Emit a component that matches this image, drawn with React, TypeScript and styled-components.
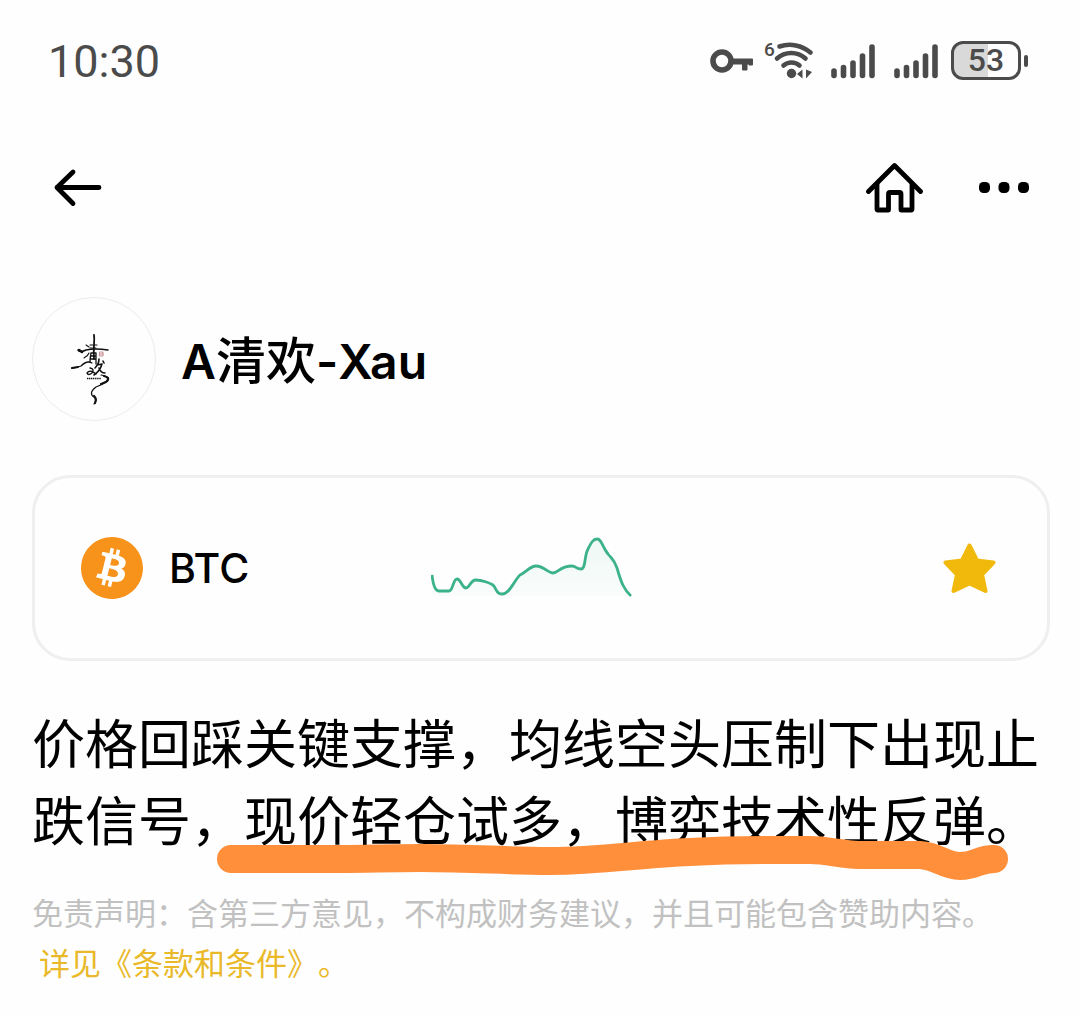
import React from "react";
import styled, { createGlobalStyle } from "styled-components";
import { SiBitcoin } from "react-icons/si";

const GlobalStyle = createGlobalStyle`
  *, *::before, *::after { box-sizing: border-box; }
  body {
    margin: 0;
    background: #fefefe;
    color: #000;
    font-family: "Inter", "Noto Sans CJK SC", sans-serif;
    text-spacing-trim: space-all;
  }
`;

const Screen = styled.div`
  min-height: 100vh;
  padding-bottom: 24px;
`;

const StatusBar = styled.header`
  display: flex;
  align-items: center;
  justify-content: space-between;
  height: 124px;
  padding: 0 52px 0 48px;
  color: #4b4b4b;
`;

const Clock = styled.time`
  font-family: "Roboto", sans-serif;
  font-size: 45px;
  line-height: 56px;
`;

const StatusIcons = styled.div`
  display: flex;
  align-items: center;
  gap: 9px;
  padding-bottom: 3px;

  svg { display: block; }
`;

const Battery = styled.div`
  display: flex;
  align-items: center;
  gap: 3px;
  margin-left: 1px;
`;

const BatteryCell = styled.div`
  display: flex;
  align-items: center;
  justify-content: center;
  width: 70px;
  height: 39px;
  border: 3px solid #4b4b4b;
  border-radius: 12px;
  background: linear-gradient(90deg, #d9d9d9 53%, #fefefe 53%);
  font-family: "Roboto", sans-serif;
  font-size: 32px;
  font-weight: 500;
  line-height: 33px;
`;

const BatteryTip = styled.div`
  width: 4px;
  height: 12px;
  border-radius: 2px;
  background: #4b4b4b;
`;

const NavBar = styled.nav`
  display: flex;
  align-items: center;
  justify-content: space-between;
  height: 128px;
  padding: 0 50px 0 52px;
`;

const NavActions = styled.div`
  display: flex;
  align-items: center;
  gap: 54px;
`;

const IconButton = styled.button`
  display: flex;
  align-items: center;
  justify-content: center;
  padding: 0;
  border: 0;
  background: none;
  color: inherit;
  cursor: pointer;
`;

const Content = styled.main`
  padding: 45px 30px 0 32px;
`;

const Author = styled.section`
  display: flex;
  align-items: center;
  gap: 25px;
`;

const Avatar = styled.div`
  display: flex;
  flex: none;
  width: 124px;
  height: 124px;
  border: 1px solid #ececec;
  border-radius: 50%;
  overflow: hidden;
`;

const AuthorName = styled.h1`
  margin: 0;
  font-size: 48px;
  font-weight: 600;
  line-height: 60px;
`;

const Han = styled.span`
  font-family: "Noto Sans CJK SC", sans-serif;
  font-size: 50px;
  font-weight: 500;
`;

const CoinCard = styled.section`
  display: grid;
  grid-template-columns: 350px 1fr auto;
  align-items: center;
  height: 186px;
  margin-top: 54px;
  padding: 0 50px 0 46px;
  border: 3px solid #efefef;
  border-radius: 38px;
`;

const Coin = styled.div`
  display: flex;
  align-items: center;
  gap: 26px;
`;

const CoinSymbol = styled.span`
  font-size: 41px;
  font-weight: 500;
  line-height: 50px;
`;

const Post = styled.p`
  position: relative;
  margin: 42px 0 0;
  font-family: "Noto Sans CJK SC", sans-serif;
  font-size: 53px;
  line-height: 77px;
`;

const Marker = styled.svg`
  position: absolute;
  left: 184px;
  top: 127px;
  pointer-events: none;
`;

const Disclaimer = styled.p`
  margin: 30px 0 0;
  color: #c1c1c1;
  font-family: "Noto Sans CJK SC", sans-serif;
  font-size: 31px;
  line-height: 50px;
`;

const TermsLink = styled.a`
  display: inline-block;
  margin-left: 7px;
  color: #e9b929;
  text-decoration: none;
`;

const KeyIcon = () => (
  <svg width="44" height="26" viewBox="0 0 44 26" fill="none" stroke="currentColor">
    <circle cx="12" cy="13" r="9" strokeWidth="5.600" />
    <path
      d="M21 11.500H42V16.500H39.500V15.500H36.500V21.500H33V15.500H21Z"
      fill="currentColor"
      strokeWidth="2"
      strokeLinejoin="round"
    />
  </svg>
);

const WifiIcon = () => (
  <svg width="52" height="54" viewBox="-1 -6 52 54" fill="none" stroke="currentColor" strokeWidth="4.600" strokeLinecap="round">
    <text x="0" y="16" fill="currentColor" stroke="none" fontFamily="Roboto, sans-serif" fontSize="19" fontWeight="500">6</text>
    <path d="M15.500 6.500A32 32 0 0 1 46.500 12.500" />
    <path d="M13 18.500A21 21 0 0 1 41.500 18.500" />
    <path d="M19.500 25.500A12 12 0 0 1 35.500 25.500" />
    <circle cx="27.500" cy="33.500" r="4.700" fill="currentColor" stroke="none" />
    <path d="M38.500 29.500V38.500L33 34ZM42 29.500V38.500L48 32Z" fill="currentColor" stroke="none" />
  </svg>
);

const SignalIcon = () => (
  <svg width="54" height="36" viewBox="0 0 54 36" stroke="currentColor" strokeWidth="5.600" strokeLinecap="round">
    <path d="M10 28V32.500M19.500 24.500V32.500M29 20V32.500M38.500 13V32.500M48 4V32.500" />
  </svg>
);

const BackIcon = () => (
  <svg width="52" height="44" viewBox="0 0 52 44" fill="none" stroke="currentColor" strokeWidth="4.800" strokeLinecap="round" strokeLinejoin="round">
    <path d="M47 21.500H5M21 6L5 21.500L21 37.500" />
  </svg>
);

const HomeIcon = () => (
  <svg width="58" height="52" viewBox="0 0 58 52" fill="none" stroke="currentColor" strokeWidth="4.800" strokeLinecap="round" strokeLinejoin="round">
    <path d="M2.500 29.500L28.500 3.500L54.500 29.500" />
    <path d="M11 22V47Q11 48 12 48H22.500V32Q22.500 30.500 24 30.500H33.500Q35 30.500 35 32V48H45Q46 48 46 47V22" />
  </svg>
);

const MoreIcon = () => (
  <svg width="52" height="12" viewBox="0 0 52 12" fill="currentColor">
    <rect x="1" y="0" width="11" height="11" rx="4.500" />
    <rect x="20.500" y="0" width="11" height="11" rx="4.500" />
    <rect x="40" y="0" width="11" height="11" rx="4.500" />
  </svg>
);

const Calligraphy = () => (
  <svg width="122" height="122" viewBox="0 0 122 122" fill="none" stroke="#111" strokeLinecap="round" strokeLinejoin="round" role="img" aria-label="清欢">
    <path d="M61 37C62 43 60 48 61 61" strokeWidth="1.800" />
    <path d="M45 52Q47 55 53 52Q62 50 75 52" strokeWidth="1.500" />
    <path d="M46 52L49 54" strokeWidth="2.600" />
    <path d="M53 47L56 49M57 47H64M57 50H63M51 60Q55 58 56 55" strokeWidth="1.100" />
    <path d="M58 55Q57 60 57 64M58 55H63V66M58 58H63M58 61H63" strokeWidth="1.300" />
    <path d="M67 54H70V58H67ZM67 56H70" stroke="#b9737a" strokeWidth="0.800" />
    <path d="M39 70Q43 70 48 68Q54 62 59 65M57 70Q62 71 59 75Q55 78 54 75Q57 71 63 76" strokeWidth="1.300" />
    <path d="M39 70L45 69" strokeWidth="2" />
    <path d="M66 61Q66 66 62 70M64 67L69 66Q67 73 61 77M66 70Q68 75 72 75M70 63L71 65" strokeWidth="1.600" />
    <path d="M54 80.500H68" strokeWidth="1.500" strokeDasharray="1.300 0.600" strokeLinecap="butt" />
    <path d="M68 77Q79 79 74 83Q69 87 63 89Q55 95 61 99Q65 101 61 106" strokeWidth="1.200" />
    <path d="M71 78Q78 80 73 84L68 86M61 98Q64 101 62 105" strokeWidth="2.200" />
  </svg>
);

const Sparkline = () => (
  <svg width="204" height="64" viewBox="1 -1 204 64" role="img" aria-label="BTC">
    <defs>
      <linearGradient id="trend" x1="0" y1="0" x2="0" y2="1">
        <stop offset="0" stopColor="#2eb385" stopOpacity="0.080" />
        <stop offset="1" stopColor="#2eb385" stopOpacity="0.020" />
      </linearGradient>
    </defs>
    <path d="M2 38C3 47 5 54 9 54H19C23 54 23 42 27 42C31 42 32 51 36 51C40 51 40 43 46 43C52 43 60 46 63 48C67 52 66 57 72 57C80 57 85 42 90 38C95 36 100 29 106 29C114 29 118 36 123 36C128 36 130 29 142 29C146 29 146 32 151 32C156 32 154 19 158 12C161 6 163 2 167 2C172 2 172 10 178 17C182 22 184 22 187 31C191 45 194 53 201 59H2Z" fill="url(#trend)" />
    <path d="M2 38C3 47 5 54 9 54H19C23 54 23 42 27 42C31 42 32 51 36 51C40 51 40 43 46 43C52 43 60 46 63 48C67 52 66 57 72 57C80 57 85 42 90 38C95 36 100 29 106 29C114 29 118 36 123 36C128 36 130 29 142 29C146 29 146 32 151 32C156 32 154 19 158 12C161 6 163 2 167 2C172 2 172 10 178 17C182 22 184 22 187 31C191 45 194 53 201 59" fill="none" stroke="#3bb28a" strokeWidth="2.800" strokeLinejoin="round" />
  </svg>
);

const StarIcon = () => (
  <svg width="54" height="52" viewBox="0 0 54 52" fill="#f0b90b" stroke="#f0b90b" strokeWidth="4" strokeLinejoin="round">
    <path d="M26.500 3.500L34 18.500L50.500 20.500L39 32.500L42.500 49L26.500 41.500L10.500 49L14 32.500L2.500 20.500L19 18.500Z" />
  </svg>
);

const HighlightStroke = () => (
  <Marker width="792" height="54" viewBox="216 830 792 54" fill="none" aria-hidden="true">
    <path
      d="M231 859H340C370 859 385 858 420 858C480 858 500 861 550 861C600 861 640 854 690 852C740 849 770 850 810 850C830 850 840 855 865 855H920C938 856 944 866 960 866C976 866 978 859 994 859"
      stroke="#ff8f3a"
      strokeWidth="28"
      strokeLinecap="round"
      strokeLinejoin="round"
    />
  </Marker>
);

export default function App() {
  return (
    <Screen>
      <GlobalStyle />
      <StatusBar>
        <Clock>10:30</Clock>
        <StatusIcons>
          <KeyIcon />
          <WifiIcon />
          <SignalIcon />
          <SignalIcon />
          <Battery>
            <BatteryCell>53</BatteryCell>
            <BatteryTip />
          </Battery>
        </StatusIcons>
      </StatusBar>
      <NavBar>
        <IconButton type="button" aria-label="返回"><BackIcon /></IconButton>
        <NavActions>
          <IconButton type="button" aria-label="首页"><HomeIcon /></IconButton>
          <IconButton type="button" aria-label="更多"><MoreIcon /></IconButton>
        </NavActions>
      </NavBar>
      <Content>
        <Author>
          <Avatar><Calligraphy /></Avatar>
          <AuthorName>A<Han>清欢</Han>-Xau</AuthorName>
        </Author>
        <CoinCard>
          <Coin>
            <SiBitcoin size={62} color="#f7931a" aria-hidden="true" />
            <CoinSymbol>BTC</CoinSymbol>
          </Coin>
          <Sparkline />
          <IconButton type="button" aria-label="收藏"><StarIcon /></IconButton>
        </CoinCard>
        <Post>
          价格回踩关键支撑，均线空头压制下出现止跌信号，现价轻仓试多，博弈技术性反弹。
          <HighlightStroke />
        </Post>
        <Disclaimer>
          免责声明：含第三方意见，不构成财务建议，并且可能包含赞助内容。
          <TermsLink href="#terms">详见《条款和条件》。</TermsLink>
        </Disclaimer>
      </Content>
    </Screen>
  );
}
